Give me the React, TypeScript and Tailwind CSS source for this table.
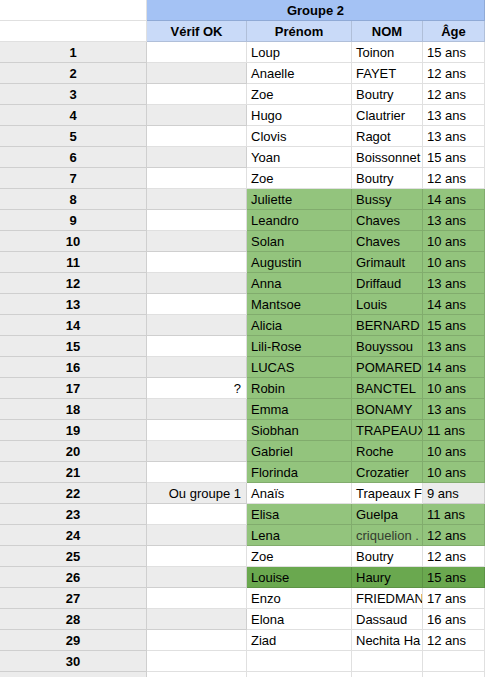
import React from "react";

type Row = {
  n: number | "";
  verif?: string;
  prenom?: string;
  nom?: string;
  age?: string;
  fill?: "g" | "dg";
  verifGray?: boolean;
  ageGray?: boolean;
  nomColor?: string;
};

const rows: Row[] = [
  { n: 1, prenom: "Loup", nom: "Toinon", age: "15 ans" },
  { n: 2, prenom: "Anaelle", nom: "FAYET", age: "12 ans", verifGray: true },
  { n: 3, prenom: "Zoe", nom: "Boutry", age: "12 ans" },
  { n: 4, prenom: "Hugo", nom: "Clautrier", age: "13 ans", verifGray: true },
  { n: 5, prenom: "Clovis", nom: "Ragot", age: "13 ans" },
  { n: 6, prenom: "Yoan", nom: "Boissonnet", age: "15 ans", verifGray: true },
  { n: 7, prenom: "Zoe", nom: "Boutry", age: "12 ans" },
  { n: 8, prenom: "Juliette", nom: "Bussy", age: "14 ans", fill: "g", verifGray: true },
  { n: 9, prenom: "Leandro", nom: "Chaves", age: "13 ans", fill: "g" },
  { n: 10, prenom: "Solan", nom: "Chaves", age: "10 ans", fill: "g", verifGray: true },
  { n: 11, prenom: "Augustin", nom: "Grimault", age: "10 ans", fill: "g" },
  { n: 12, prenom: "Anna", nom: "Driffaud", age: "13 ans", fill: "g", verifGray: true },
  { n: 13, prenom: "Mantsoe", nom: "Louis", age: "14 ans", fill: "g" },
  { n: 14, prenom: "Alicia", nom: "BERNARD", age: "15 ans", fill: "g", verifGray: true },
  { n: 15, prenom: "Lili-Rose", nom: "Bouyssou", age: "13 ans", fill: "g" },
  { n: 16, prenom: "LUCAS", nom: "POMARED", age: "14 ans", fill: "g", verifGray: true },
  { n: 17, verif: "?", prenom: "Robin", nom: "BANCTEL", age: "10 ans", fill: "g" },
  { n: 18, prenom: "Emma", nom: "BONAMY", age: "13 ans", fill: "g", verifGray: true },
  { n: 19, prenom: "Siobhan", nom: "TRAPEAUX", age: "11 ans", fill: "g" },
  { n: 20, prenom: "Gabriel", nom: "Roche", age: "10 ans", fill: "g", verifGray: true },
  { n: 21, prenom: "Florinda", nom: "Crozatier", age: "10 ans", fill: "g" },
  { n: 22, verif: "Ou groupe 1", prenom: "Anaïs", nom: "Trapeaux F", age: "9 ans", verifGray: true, ageGray: true },
  { n: 23, prenom: "Elisa", nom: "Guelpa", age: "11 ans", fill: "g" },
  { n: 24, prenom: "Lena", nom: "criquelion .", age: "12 ans", fill: "g", verifGray: true, nomColor: "text-[#333d2f]" },
  { n: 25, prenom: "Zoe", nom: "Boutry", age: "12 ans" },
  { n: 26, prenom: "Louise", nom: "Haury", age: "15 ans", fill: "dg", verifGray: true },
  { n: 27, prenom: "Enzo", nom: "FRIEDMAN", age: "17 ans" },
  { n: 28, prenom: "Elona", nom: "Dassaud", age: "16 ans", verifGray: true },
  { n: 29, prenom: "Ziad", nom: "Nechita Ha", age: "12 ans" },
  { n: 30 },
  { n: "" },
];

const cell =
  "h-[21px] shrink-0 border-r border-b border-black/[0.12] overflow-hidden whitespace-nowrap flex items-center";

export default function App() {
  return (
    <div
      className="w-[485px] h-[677px] overflow-hidden bg-white text-black text-[13px] leading-[15px]"
      style={{ fontFamily: '"Liberation Sans", Arial, sans-serif' }}
    >
      <div className="flex">
        <div className={`${cell} w-[147px] bg-white`} />
        <div className={`${cell} flex-1 justify-center bg-[#a4c2f4] font-bold`}>Groupe 2</div>
      </div>
      <div className="flex">
        <div className={`${cell} w-[147px] bg-white`} />
        <div className={`${cell} w-[100px] justify-center bg-[#c9daf8] font-bold`}>Vérif OK</div>
        <div className={`${cell} w-[105px] justify-center bg-[#c9daf8] font-bold`}>Prénom</div>
        <div className={`${cell} w-[71px] justify-center bg-[#c9daf8] font-bold`}>NOM</div>
        <div className={`${cell} flex-1 justify-center bg-[#c9daf8] font-bold`}>Âge</div>
      </div>
      {rows.map((r, i) => {
        const fill =
          r.fill === "g" ? "bg-[#93c47d]" : r.fill === "dg" ? "bg-[#6aa84f]" : "bg-white";
        return (
          <div className="flex" key={i}>
            <div className={`${cell} w-[147px] justify-center bg-[#ececec] font-bold`}>{r.n}</div>
            <div
              className={`${cell} w-[100px] justify-end pr-[5px] ${r.verifGray ? "bg-[#ececec]" : "bg-white"}`}
            >
              {r.verif}
            </div>
            <div className={`${cell} w-[105px] pl-[4px] ${fill}`}>{r.prenom}</div>
            <div className={`${cell} w-[71px] pl-[4px] ${fill} ${r.nomColor ?? ""}`}>{r.nom}</div>
            <div className={`${cell} flex-1 pl-[4px] ${r.ageGray ? "bg-[#ececec]" : fill}`}>{r.age}</div>
          </div>
        );
      })}
    </div>
  );
}
